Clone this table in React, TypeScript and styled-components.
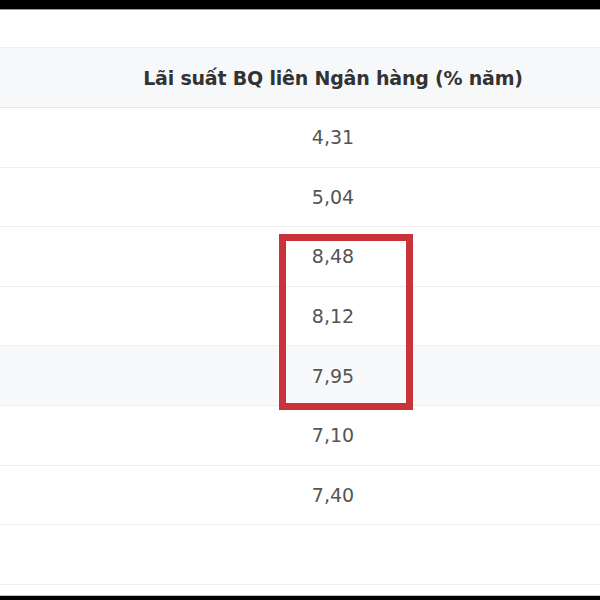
import React from "react";
import styled, { createGlobalStyle } from "styled-components";

const GlobalStyle = createGlobalStyle`
  html, body {
    margin: 0;
    padding: 0;
    background: #fff;
  }
  body {
    overflow: hidden;
  }
`;

//styled
const Frame = styled.div`
  width: 600px;
  height: 600px;
  display: flex;
  flex-direction: column;
  background: #fff;
  font-family: "DejaVu Sans", "Liberation Sans", sans-serif;
`;
const TopBar = styled.div`
  height: 9px;
  background: #000;
  border-bottom: 1px solid #9a9a9a;
  flex: none;
`;
const Spacer = styled.div`
  height: 37px;
  flex: none;
`;
const Table = styled.div`
  position: relative;
  flex: none;
`;
const HeaderRow = styled.div`
  display: grid;
  grid-template-columns: 66px 1fr;
  align-items: center;
  height: 59px;
  background: #f7f8fa;
  border-top: 1px solid #eceef0;
  border-bottom: 1px solid #e4e6ea;
`;
const HeaderCell = styled.div`
  font-size: 19px;
  font-weight: bold;
  letter-spacing: -0.2px;
  color: #333;
  text-align: center;
  white-space: nowrap;
`;
const Row = styled.div<{ $shaded?: boolean }>`
  display: grid;
  grid-template-columns: 66px 1fr;
  align-items: center;
  height: 58.6px;
  background: ${(p) => (p.$shaded ? "#f8f9fa" : "#fff")};
  border-bottom: 1px solid #eeeeee;
`;
const Cell = styled.div`
  font-size: 19px;
  color: #555;
  text-align: center;
`;
const Highlight = styled.div`
  position: absolute;
  left: 279px;
  top: 187px;
  width: 134px;
  height: 176px;
  box-sizing: border-box;
  border: 7px solid #c9343a;
  pointer-events: none;
`;
const Fill = styled.div`
  flex: 1;
`;
const BottomBar = styled.div`
  height: 4px;
  background: #000;
  border-top: 1px solid #bdbdbd;
  flex: none;
`;

const rates = ["4,31", "5,04", "8,48", "8,12", "7,95", "7,10", "7,40", ""];

const App = () => {
  return (
    <>
      <GlobalStyle />
      <Frame>
        <TopBar />
        <Spacer />
        <Table>
          <HeaderRow>
            <div />
            <HeaderCell>Lãi suất BQ liên Ngân hàng (% năm)</HeaderCell>
          </HeaderRow>
          {rates.map((r, i) => (
            <Row key={i} $shaded={i === 4}>
              <div />
              <Cell>{r}</Cell>
            </Row>
          ))}
          <Highlight />
        </Table>
        <Fill />
        <BottomBar />
      </Frame>
    </>
  );
};

export default App;
